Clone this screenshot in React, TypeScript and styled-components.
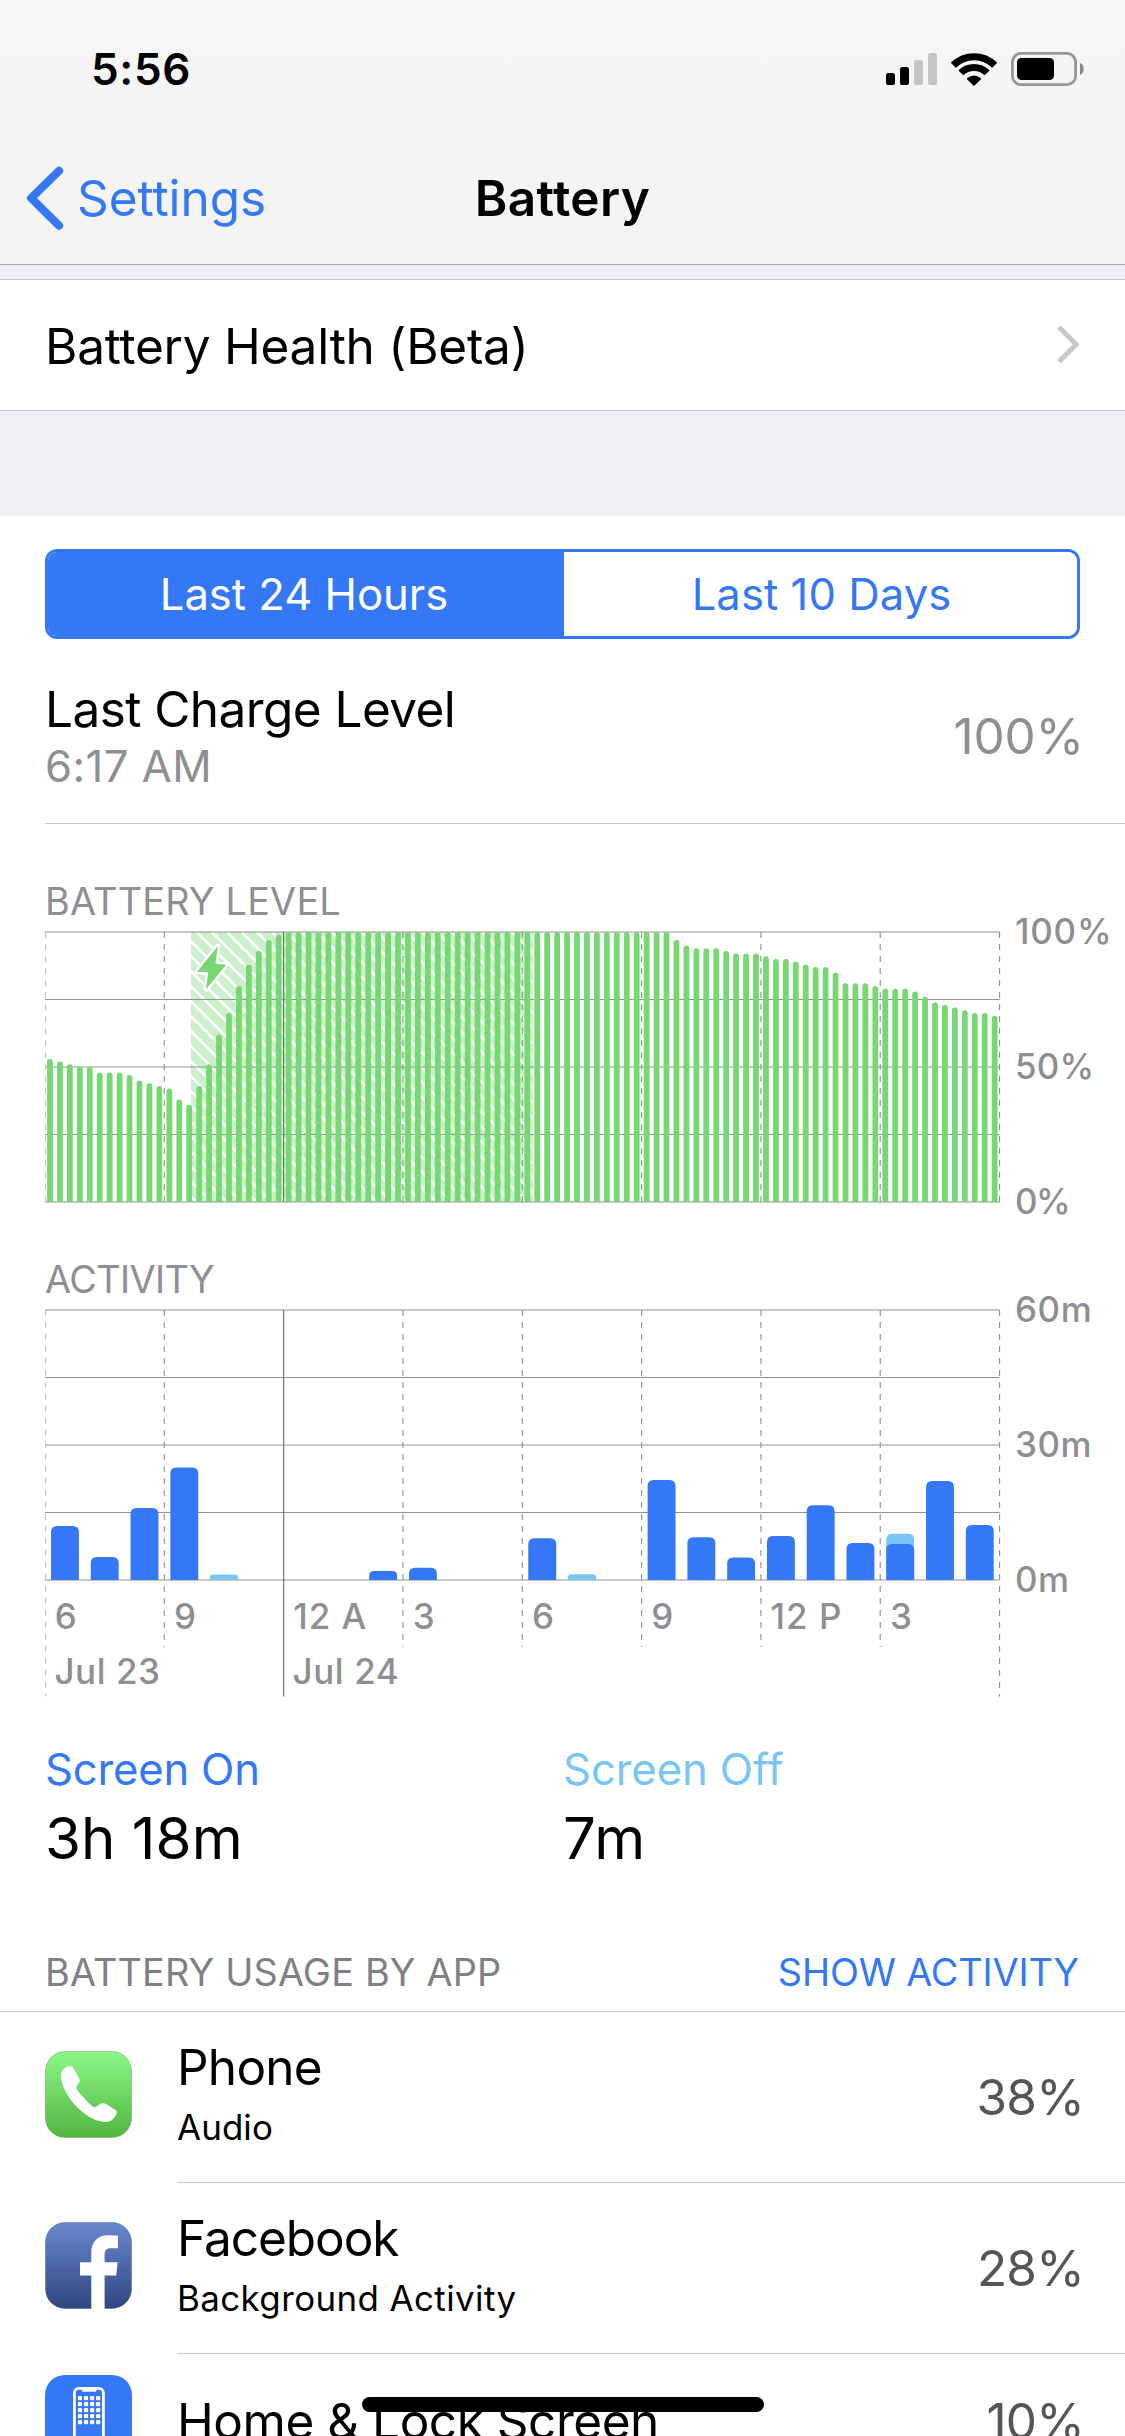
import React from 'react';
import styled, { createGlobalStyle } from 'styled-components';

const blue = '#3478f6';
const lightBlue = '#79c5f6';
const green = '#77d772';
const gray = '#8e8e93';
const hairline = '#c8c7cc';
const groupBg = '#efeef3';
const fontStack = 'Inter, "Liberation Sans", sans-serif';

const GlobalStyle = createGlobalStyle`
  * { box-sizing: border-box; }
  body { margin: 0; background: #fff; }
`;

const Screen = styled.div`
  position: relative;
  width: 1125px;
  height: 2436px;
  overflow: hidden;
  display: flex;
  flex-direction: column;
  background: #fff;
  font-family: ${fontStack};
  color: #000;
`;

const Text = styled.span<{ $size: number; $line: number; $tracking?: number; $weight?: number; $color?: string }>`
  display: block;
  white-space: pre;
  font-size: ${(p) => p.$size}px;
  line-height: ${(p) => p.$line}px;
  letter-spacing: ${(p) => p.$tracking ?? 0}px;
  font-weight: ${(p) => p.$weight ?? 400};
  color: ${(p) => p.$color ?? '#000'};
`;

/* Header */
const Header = styled.header`
  flex: none;
  background: linear-gradient(#f6f6f6, #f3f3f4);
  border-bottom: 1px solid #a9a9ad;
`;

const StatusBar = styled.div`
  height: 132px;
  padding: 6px 41px 0 91px;
  display: flex;
  align-items: center;
  justify-content: space-between;
`;

const StatusIcons = styled.div`
  display: flex;
  align-items: center;
  gap: 14px;
  svg { display: block; }
`;

const NavBar = styled.nav`
  height: 132px;
  display: grid;
  grid-template-columns: 1fr auto 1fr;
  align-items: center;
`;

const BackButton = styled.div`
  display: flex;
  align-items: center;
  gap: 13px;
  padding-left: 26px;
`;

/* Battery health row */
const HealthGroup = styled.section`
  flex: none;
  padding: 14px 0 105px;
  background: ${groupBg};
`;

const HealthRow = styled.div`
  height: 132px;
  padding: 2px 45px 0;
  display: flex;
  align-items: center;
  justify-content: space-between;
  background: #fff;
  border: solid ${hairline};
  border-width: 1px 0;
  svg { margin-bottom: 2px; }
`;

/* Usage panel */
const Segmented = styled.div`
  flex: none;
  height: 90px;
  margin: 33px 45px 0;
  display: grid;
  grid-template-columns: 516px 1fr;
  border: 3px solid ${blue};
  border-radius: 12px;
  overflow: hidden;
`;

const Segment = styled.div<{ $active?: boolean }>`
  display: flex;
  align-items: center;
  justify-content: center;
  padding: ${(p) => (p.$active ? '2px 4px 0 0' : '2px 0 0 2px')};
  background: ${(p) => (p.$active ? blue : '#fff')};
`;

const ChargeRow = styled.div`
  flex: none;
  height: 185px;
  margin-left: 45px;
  padding: 40px 41px 30px 0;
  display: flex;
  align-items: center;
  justify-content: space-between;
  border-bottom: 1px solid ${hairline};
`;

const ChartSection = styled.section<{ $top: number }>`
  flex: none;
  padding: ${(p) => p.$top}px 0 0 45px;
  svg { display: block; overflow: visible; }
`;

const Totals = styled.section`
  flex: none;
  margin: 43px 45px 0;
  display: grid;
  grid-template-columns: 518px 1fr;
`;

const ListHeader = styled.div`
  flex: none;
  height: 132px;
  padding: 68px 46px 0 45px;
  display: flex;
  justify-content: space-between;
  align-items: flex-start;
  border-bottom: 1px solid ${hairline};
`;

const AppRow = styled.div<{ $compact?: boolean }>`
  flex: none;
  height: ${(p) => (p.$compact ? 134 : 171)}px;
  padding-left: 45px;
  display: flex;
  align-items: center;
  gap: 45px;
`;

const AppIcon = styled.svg`
  flex: none;
  width: 87px;
  height: 87px;
  margin-bottom: 6px;
`;

const AppBody = styled.div`
  flex: 1;
  height: 100%;
  padding-right: 41px;
  display: flex;
  align-items: center;
  justify-content: space-between;
  border-bottom: 1px solid ${hairline};
`;

const AppTitles = styled.div<{ $lift: number }>`
  display: flex;
  flex-direction: column;
  gap: 3px;
  padding-bottom: ${(p) => p.$lift}px;
`;

const HomeIndicator = styled.div`
  position: absolute;
  left: 362px;
  bottom: 24px;
  width: 402px;
  height: 15px;
  border-radius: 8px;
  background: #000;
`;

const SignalIcon = () => (
  <svg width="51" height="32" viewBox="0 0 51 32">
    <rect x="0" y="20" width="9" height="12" rx="2.6" />
    <rect x="14" y="14" width="9" height="18" rx="2.6" />
    <rect x="28" y="7" width="9" height="25" rx="2.6" fill="#c4c4c4" />
    <rect x="42" y="0" width="9" height="32" rx="2.6" fill="#c4c4c4" />
  </svg>
);

const WifiIcon = () => (
  <svg width="46" height="33" viewBox="0 0 46 33">
    <path d="M2.3 12.3A29.3 29.3 0 0 1 43.7 12.3" fill="none" stroke="#000" strokeWidth="7.2" />
    <path d="M9.9 19.9A18.5 18.5 0 0 1 36.1 19.9" fill="none" stroke="#000" strokeWidth="7" />
    <path d="M23 33L16.2 26.4Q15.6 25.6 16.4 25Q19.6 22.4 23 22.4T29.6 25Q30.4 25.6 29.8 26.4Z" />
  </svg>
);

const BatteryIcon = () => (
  <svg width="73" height="34" viewBox="0 0 73 34">
    <rect x="1.4" y="1.4" width="63.2" height="31.2" rx="8.5" fill="none" stroke="#959595" strokeWidth="2.8" />
    <rect x="6" y="6" width="37" height="22" rx="4.5" />
    <path d="M69 11C74 12.6 74 21.4 69 23Z" fill="#8a8a8a" />
  </svg>
);

/* Chart geometry */
const PLOT_W = 954.6;
const PLOT_H = 270;
const TOP = 7;
const STEP = 119.32;

const levels: number[] = [
  53, 52, 51, 50, 50, 48, 48, 48, 47, 45, 44, 43, 42, 38, 36, 43, 51, 62, 70, 80, 88, 93, 97, 99,
  ...Array<number>(39).fill(100),
  97, 95, 94, 94, 94, 93, 92, 92, 92, 91, 90, 90, 89, 88, 87, 87, 85, 81, 81, 81, 80, 79, 79, 79,
  78, 76, 74, 73, 72, 71, 70, 70, 69,
];

type Hour = { hour: number; on: number; off?: number };
const activity: Hour[] = [
  { hour: 0, on: 12 }, { hour: 1, on: 5.1 }, { hour: 2, on: 16 }, { hour: 3, on: 25 }, { hour: 4, on: 0, off: 1.2 },
  { hour: 8, on: 2 }, { hour: 9, on: 2.7 }, { hour: 12, on: 9.3 }, { hour: 13, on: 0, off: 1.3 },
  { hour: 15, on: 22.2 }, { hour: 16, on: 9.5 }, { hour: 17, on: 5 }, { hour: 18, on: 9.8 }, { hour: 19, on: 16.6 },
  { hour: 20, on: 8.2 }, { hour: 21, on: 8, off: 2.3 }, { hour: 22, on: 22 }, { hour: 23, on: 12.2 },
];

const hourLabels = ['6', '9', '12 A', '3', '6', '9', '12 P', '3'];

const topRounded = (x: number, w: number, h: number, radius: number) => {
  const r = Math.min(radius, w / 2, h / 2);
  const base = TOP + PLOT_H;
  const y = base - h;
  return `M${x} ${base}V${y + r}Q${x} ${y} ${x + r} ${y}H${x + w - r}Q${x + w} ${y} ${x + w} ${y + r}V${base}Z`;
};

const levelBar = (x: number, w: number, h: number) => {
  const base = TOP + PLOT_H;
  const r = w / 2;
  return `M${x} ${base}V${base - h + r}A${r} ${r} 0 0 1 ${x + w} ${base - h + r}V${base}Z`;
};

const HorizontalGrid = () => (
  <g stroke="#929292" strokeWidth="1">
    {[0, 1, 2, 3, 4].map((i) => (
      <line key={i} x1="0" x2={PLOT_W} y1={TOP + i * 67.5} y2={TOP + i * 67.5} strokeWidth={i % 2 ? 1 : 1.2} />
    ))}
  </g>
);

const VerticalGrid = ({ short, long }: { short: number; long: number }) => (
  <g>
    {Array.from({ length: 9 }, (_, i) => {
      const x = i === 0 ? 0.5 : i * STEP;
      const solid = i === 2;
      const end = i === 0 || i === 2 || i === 8 ? long : short;
      return (
        <line
          key={i}
          x1={x}
          x2={x}
          y1={TOP}
          y2={TOP + end}
          stroke={solid ? '#6c6c6c' : i === 0 ? '#c4c4c4' : '#929292'}
          strokeWidth={1.15}
          strokeDasharray={solid ? undefined : '6 6'}
        />
      );
    })}
  </g>
);

const AxisText = styled.text<{ $tracking?: number }>`
  font-family: ${fontStack};
  font-size: 34.9px;
  font-weight: 500;
  fill: ${gray};
  letter-spacing: ${(p) => p.$tracking ?? 0.6}px;
`;

const ScaleLabels = ({ labels }: { labels: [string, number][] }) => (
  <g>
    {labels.map(([label, tracking], i) => (
      <AxisText key={label} x={970} y={TOP + i * 135 + 12} $tracking={tracking}>
        {label}
      </AxisText>
    ))}
  </g>
);

const LevelChart = () => (
  <svg width="1080" height="330" viewBox="0 0 1080 330">
    <defs>
      <clipPath id="charging">
        <rect x="145.7" y={TOP} width="342.9" height={PLOT_H} />
      </clipPath>
    </defs>
    <g clipPath="url(#charging)">
      <rect x="145.7" y={TOP} width="342.9" height={PLOT_H} fill="#cbf0cb" />
      {Array.from({ length: 42 }, (_, i) => {
        const x = 151.7 + (i - 19) * 15;
        return <line key={i} x1={x} y1={TOP} x2={x + 280} y2={TOP + 280} stroke="#fff" strokeWidth="2.7" />;
      })}
    </g>
    <HorizontalGrid />
    <VerticalGrid short={270} long={270} />
    <g fill={green}>
      {levels.map((level, i) => (
        <path key={i} d={levelBar(i * (PLOT_W / 96) + 2.1, 5.8, level * 2.7)} />
      ))}
    </g>
    <path
      d="M172.9 21L152.1 46.7L163.2 47.3L161.1 64.3L181.1 39.7L170.4 38.7Z"
      fill={green}
      stroke="#fff"
      strokeWidth="5"
      strokeLinejoin="round"
      paintOrder="stroke"
    />
    <ScaleLabels labels={[['100%', 0.8], ['50%', 0.2], ['0%', -1.5]]} />
  </svg>
);

const ActivityChart = () => (
  <svg width="1080" height="397" viewBox="0 0 1080 397">
    <HorizontalGrid />
    <VerticalGrid short={337} long={386.5} />
    {activity.map(({ hour, on, off = 0 }) => {
      const x = hour * (PLOT_W / 24) + 6;
      return (
        <g key={hour}>
          {off > 0 && <path d={topRounded(x, 27.9, (on + off) * 4.5, 6)} fill={lightBlue} />}
          {on > 0 && <path d={topRounded(x, 27.9, on * 4.5, 6)} fill={blue} />}
        </g>
      );
    })}
    {hourLabels.map((label, i) => (
      <AxisText key={i} x={i * STEP + 9.7} y={325.7} $tracking={label.length > 1 ? 1 : 0}>
        {label}
      </AxisText>
    ))}
    <AxisText x="9.4" y="380.7">Jul 23</AxisText>
    <AxisText x="247.6" y="380.7">Jul 24</AxisText>
    <ScaleLabels labels={[['60m', 0.6], ['30m', 0.6], ['0m', 0.4]]} />
  </svg>
);

const PhoneIcon = () => (
  <AppIcon viewBox="0 0 87 87">
    <defs>
      <linearGradient id="phoneFill" x1="0" y1="0" x2="0" y2="1">
        <stop offset="0" stopColor="#8af888" />
        <stop offset="1" stopColor="#53b540" />
      </linearGradient>
    </defs>
    <rect x="0.5" y="0.5" width="86" height="86" rx="19.5" fill="url(#phoneFill)" stroke="#3a8a33" strokeOpacity="0.35" />
    <path
      d="M26 15C22 14.5 16 18 16 24C16 34 22 46 32 56C42 66 52 71 61 71C67 71 70 66 71.7 62.5C72.3 60.5 71.5 60 70 58.8L60 52.5C58.5 51.6 57 51.8 55.5 53L51 55.7C49.5 56.5 48 55.7 46.5 54.4C41 49.7 35 43 32 38.5C31 37 31 36 32 34.5L34 31.5C35 30 35 28.7 34 27.2L28 16.5C27.3 15.3 27 15 26 15Z"
      fill="#fff"
    />
  </AppIcon>
);

const FacebookIcon = () => (
  <AppIcon viewBox="0 0 87 87">
    <defs>
      <linearGradient id="facebookFill" x1="0" y1="0" x2="0" y2="1">
        <stop offset="0" stopColor="#6a88d1" />
        <stop offset="1" stopColor="#2f467f" />
      </linearGradient>
    </defs>
    <rect x="0.5" y="0.5" width="86" height="86" rx="19.5" fill="url(#facebookFill)" stroke="#2a3e70" strokeOpacity="0.35" />
    <path
      d="M73 13.8V26.2H66C61 26.2 59.6 28.6 59.6 32.4V40.2H72.6L71.2 53.5H59.6V87H46.3V53.5H35V40.2H46.3V30.6C46.3 20 52.5 13.3 63 13.3C67 13.3 71 13.5 73 13.8Z"
      fill="#fff"
    />
  </AppIcon>
);

const HomeScreenIcon = () => (
  <AppIcon viewBox="0 0 87 87">
    <rect width="87" height="87" rx="20" fill={blue} />
    <rect x="29.4" y="13.4" width="29" height="61" rx="4.5" fill="none" stroke="#fff" strokeWidth="2.8" />
    <path d="M37 13H51.5V15.4Q51.5 16.8 50 16.8H38.5Q37 16.8 37 15.4Z" fill="#fff" />
    <g fill="#fff">
      {Array.from({ length: 20 }, (_, i) => (
        <rect key={i} x={32.9 + (i % 4) * 6.05} y={21 + Math.floor(i / 4) * 6} width="4.2" height="4.2" rx="1" />
      ))}
    </g>
  </AppIcon>
);

type AppUsage = {
  name: string;
  nameTracking: number;
  detail?: string;
  detailTracking?: number;
  percent: string;
  icon: React.ReactNode;
};

const apps: AppUsage[] = [
  { name: 'Phone', nameTracking: -0.75, detail: 'Audio', detailTracking: 0.1, percent: '38%', icon: <PhoneIcon /> },
  { name: 'Facebook', nameTracking: -1.05, detail: 'Background Activity', detailTracking: 0.41, percent: '28%', icon: <FacebookIcon /> },
  { name: 'Home & Lock Screen', nameTracking: -0.47, percent: '10%', icon: <HomeScreenIcon /> },
];

export default function App() {
  return (
    <Screen>
      <GlobalStyle />
      <Header>
        <StatusBar>
          <Text $size={44} $line={54} $weight={600} $tracking={0.6}>5:56</Text>
          <StatusIcons>
            <SignalIcon />
            <WifiIcon />
            <BatteryIcon />
          </StatusIcons>
        </StatusBar>
        <NavBar>
          <BackButton>
            <svg width="38" height="64" viewBox="0 0 38 64">
              <path d="M33 4.8L5.2 32.2L33 59.6" fill="none" stroke={blue} strokeWidth="8.2" strokeLinecap="round" strokeLinejoin="round" />
            </svg>
            <Text $size={49.5} $line={60} $tracking={-0.05} $color={blue}>Settings</Text>
          </BackButton>
          <Text $size={49.5} $line={60} $weight={600} $tracking={0.4}>Battery</Text>
        </NavBar>
      </Header>

      <HealthGroup>
        <HealthRow>
          <Text $size={49.5} $line={60} $tracking={-0.24}>Battery Health (Beta)</Text>
          <svg width="23" height="40" viewBox="0 0 23 40">
            <path d="M1.9 2L19.2 19.4L1.9 36.8" fill="none" stroke="#c7c7cc" strokeWidth="5" />
          </svg>
        </HealthRow>
      </HealthGroup>

      <Segmented>
        <Segment $active>
          <Text $size={43.6} $line={54} $tracking={-0.02} $color="#fff">Last 24 Hours</Text>
        </Segment>
        <Segment>
          <Text $size={43.6} $line={54} $tracking={0.06} $color={blue}>Last 10 Days</Text>
        </Segment>
      </Segmented>

      <ChargeRow>
        <div>
          <Text $size={49.5} $line={61} $tracking={-0.56}>Last Charge Level</Text>
          <Text $size={43.6} $line={54} $tracking={0.5} $color={gray}>6:17 AM</Text>
        </div>
        <Text $size={49.5} $line={60} $tracking={-0.2} $color={gray}>100%</Text>
      </ChargeRow>

      <ChartSection $top={53}>
        <Text $size={37.8} $line={48} $tracking={0.22} $color={gray}>BATTERY LEVEL</Text>
        <LevelChart />
        <Text $size={37.8} $line={48} $tracking={-0.6} $color={gray}>ACTIVITY</Text>
        <ActivityChart />
      </ChartSection>

      <Totals>
        <div>
          <Text $size={43.6} $line={54} $tracking={-0.19} $color={blue}>Screen On</Text>
          <Text $size={58.2} $line={83} $tracking={0.05}>3h 18m</Text>
        </div>
        <div>
          <Text $size={43.6} $line={54} $tracking={-0.08} $color={lightBlue}>Screen Off</Text>
          <Text $size={58.2} $line={83} $tracking={1.2}>7m</Text>
        </div>
      </Totals>

      <ListHeader>
        <Text $size={37.8} $line={48} $tracking={0.17} $color="#808084">BATTERY USAGE BY APP</Text>
        <Text $size={37.8} $line={48} $tracking={-0.15} $color={blue}>SHOW ACTIVITY</Text>
      </ListHeader>

      {apps.map((app) => (
        <AppRow key={app.name} $compact={!app.detail}>
          {app.icon}
          <AppBody>
            <AppTitles $lift={app.detail ? 4 : 0}>
              <Text $size={49.5} $line={60} $tracking={app.nameTracking}>{app.name}</Text>
              {app.detail && (
                <Text $size={34.9} $line={54} $tracking={app.detailTracking}>{app.detail}</Text>
              )}
            </AppTitles>
            <Text $size={49.5} $line={60} $tracking={-0.8} $color="#555">{app.percent}</Text>
          </AppBody>
        </AppRow>
      ))}
      <HomeIndicator />
    </Screen>
  );
}
